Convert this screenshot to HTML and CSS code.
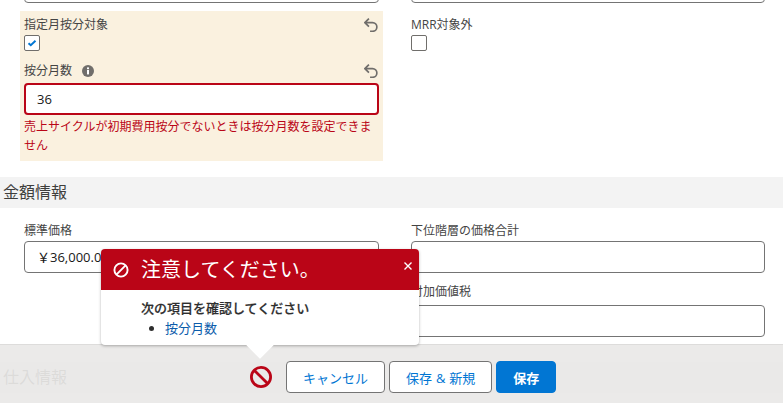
FILE: index.html
```html
<!DOCTYPE html>
<html lang="ja">
<head>
<meta charset="utf-8">
<title>編集</title>
<link rel="stylesheet" href="styles.css">
</head>
<body>
<div class="page">
  <div class="row top-row">
    <div class="field"><div class="input"></div></div>
    <div class="field"><div class="input"></div></div>
  </div>
  <div class="row changed-row">
    <div class="changed">
      <div class="label-line">
        <span class="label">指定月按分対象</span>
        <svg class="undo" viewBox="1 .5 12.5 12.5"><path d="M2.6 4.6h6a3.9 3.9 0 0 1 0 7.8H6.4M5.4 1 1.8 4.6l3.6 3.6" fill="none" stroke="#706e6b" stroke-width="1.5"/></svg>
      </div>
      <div class="checkbox">
        <svg viewBox="0 0 16 16"><path d="M4 8.2l2.6 2.4L12 5.4" fill="none" stroke="#0176d3" stroke-width="2.2"/></svg>
      </div>
      <div class="label-line second">
        <span class="label">按分月数</span>
        <svg class="info" viewBox="0 0 12 12"><circle cx="6" cy="6" r="6" fill="#706e6b"/><rect x="5" y="5" width="2" height="4.4" fill="#fff"/><rect x="5" y="2.4" width="2" height="1.8" fill="#fff"/></svg>
        <svg class="undo" viewBox="1 .5 12.5 12.5"><path d="M2.6 4.6h6a3.9 3.9 0 0 1 0 7.8H6.4M5.4 1 1.8 4.6l3.6 3.6" fill="none" stroke="#706e6b" stroke-width="1.5"/></svg>
      </div>
      <div class="input error"><span class="value">36</span></div>
      <div class="error-text">売上サイクルが初期費用按分でないときは按分月数を設定できません</div>
    </div>
    <div class="field">
      <div class="label-line"><span class="label">MRR対象外</span></div>
      <div class="checkbox"></div>
    </div>
  </div>
  <h2 class="section">金額情報</h2>
  <div class="row price-row">
    <div class="field">
      <div class="label-line"><span class="label">標準価格</span></div>
      <div class="input"><span class="value">￥36,000.00</span></div>
    </div>
    <div class="field">
      <div class="label-line"><span class="label">下位階層の価格合計</span></div>
      <div class="input"></div>
    </div>
  </div>
  <div class="row tax-row">
    <div class="field"></div>
    <div class="field">
      <div class="label-line"><span class="label">付加価値税</span></div>
      <div class="input"></div>
    </div>
  </div>
  <h2 class="section next">仕入情報</h2>

  <footer class="footer">
    <svg class="stop" viewBox="0 0 24 24"><circle cx="12" cy="12" r="9.6" fill="none" stroke="#ba0517" stroke-width="2.8"/><path d="M5.4 5.4l13.2 13.2" stroke="#ba0517" stroke-width="2.8"/></svg>
    <button class="btn">キャンセル</button>
    <button class="btn wide">保存 &amp; 新規</button>
    <button class="btn primary">保存</button>
  </footer>

  <div class="popover">
    <div class="pop-head">
      <svg class="pop-stop" viewBox="0 0 16 16"><circle cx="8" cy="8" r="6.6" fill="none" stroke="#fff" stroke-width="1.9"/><path d="M3.4 12.6l9.2-9.2" stroke="#fff" stroke-width="1.9"/></svg>
      <span class="pop-title">注意してください。</span>
      <svg class="pop-close" viewBox="0 0 10 10"><path d="M1.5 1.5l7 7M8.5 1.5l-7 7" stroke="#fff" stroke-width="1.4"/></svg>
    </div>
    <div class="pop-body">
      <div class="pop-msg">次の項目を確認してください</div>
      <ul class="pop-list"><li><a class="pop-link">按分月数</a></li></ul>
    </div>
    <div class="nubbin"></div>
  </div>
</div>
</body>
</html>
```
FILE: styles.css
```css
* { box-sizing: border-box; }
html, body { margin: 0; padding: 0; background: #fff; }
body { font-family: "Open Sans", "Noto Sans CJK JP", sans-serif; color: #3e3e3c; font-size: 13px; }
.page { position: relative; width: 783px; height: 403px; overflow: hidden; }
.row { display: grid; grid-template-columns: 363px 362px; column-gap: 24px; padding-left: 20px; }
.field { padding: 0 4px; }
.top-row { margin-top: -29px; }
.changed-row { margin-top: 8px; }
.changed { background: #faf1df; height: 150px; padding: 6px 4px 0; }
.label-line { display: flex; align-items: center; height: 16px; font-size: 12px; color: #444; }
.changed-row .field { padding-top: 6px; }
.label-line.second { margin-top: 12px; }
.label { line-height: 16px; }
.undo { width: 14px; height: 14px; margin-left: auto; margin-right: 1px; }
.info { width: 12px; height: 12px; margin-left: 10px; }
.checkbox { width: 16px; height: 16px; margin-top: 2px; background: #fff; border: 1px solid #706e6b; border-radius: 2px; }
.checkbox svg { display: block; width: 14px; height: 14px; }
.input { height: 32px; background: #fff; border: 1px solid #747474; border-radius: 4px; padding: 0 12px; display: flex; align-items: center; font-size: 13px; color: #181818; }
.input.error { border: 2px solid #ba0517; margin-top: 4px; height: 32px; padding: 0 11px; }
.value { line-height: 16px; }
.error-text { font-size: 12px; line-height: 19px; color: #ba0517; margin-top: 2px; }
.section { margin: 16px 0 0; height: 31px; padding-left: 3px; background: #f3f3f3; font-size: 16px; font-weight: 400; line-height: 31px; color: #3e3e3c; }
.price-row { margin-top: 15px; }
.price-row .input { margin-top: 2px; }
.tax-row { margin-top: 11px; }
.tax-row .input { margin-top: 5px; }
.section.next { margin-top: 25px; }
.footer { position: absolute; left: 0; right: 0; top: 344px; height: 59px; background: rgba(233, 232, 231, .92); border-top: 1px solid #dddcdb; display: flex; align-items: flex-start; padding: 16px 0 0 249px; gap: 4px; }
.stop { width: 24px; height: 24px; margin: 4px 9px 0 0; }
.btn { height: 32px; padding: 0 16px; border: 1px solid #747474; border-radius: 4px; background: #fff; color: #0176d3; font: 13px "Open Sans", "Noto Sans CJK JP", sans-serif; }
.btn.wide { word-spacing: .5px; }
.btn.primary { background: #0176d3; border-color: #0176d3; color: #fff; font-weight: 700; }
.popover { position: absolute; left: 101px; top: 249px; width: 318px; height: 96px; background: #fff; border-radius: 4px; box-shadow: 0 1px 3px rgba(0, 0, 0, .3); }
.pop-head { position: relative; display: flex; align-items: center; height: 41px; background: #ba0517; border-radius: 4px 4px 0 0; padding-left: 12px; color: #fff; }
.pop-stop { width: 16px; height: 16px; margin-right: 12px; }
.pop-title { font-size: 20px; line-height: 24px; }
.pop-close { position: absolute; top: 12px; right: 6px; width: 10px; height: 10px; }
.pop-body { padding: 9px 0 0 40px; font-size: 13px; color: #2e2e2e; }
.pop-msg { font-weight: 500; line-height: 18px; -webkit-text-stroke: .2px #2e2e2e; }
.pop-list { margin: 2px 0 0; padding: 0 0 0 24px; line-height: 18px; }
.pop-link { color: #0b5cab; }
.nubbin { position: absolute; left: 149px; top: 86px; width: 20px; height: 20px; background: #fff; transform: rotate(45deg); clip-path: polygon(100% 0, 100% 100%, 0 100%); }
```
